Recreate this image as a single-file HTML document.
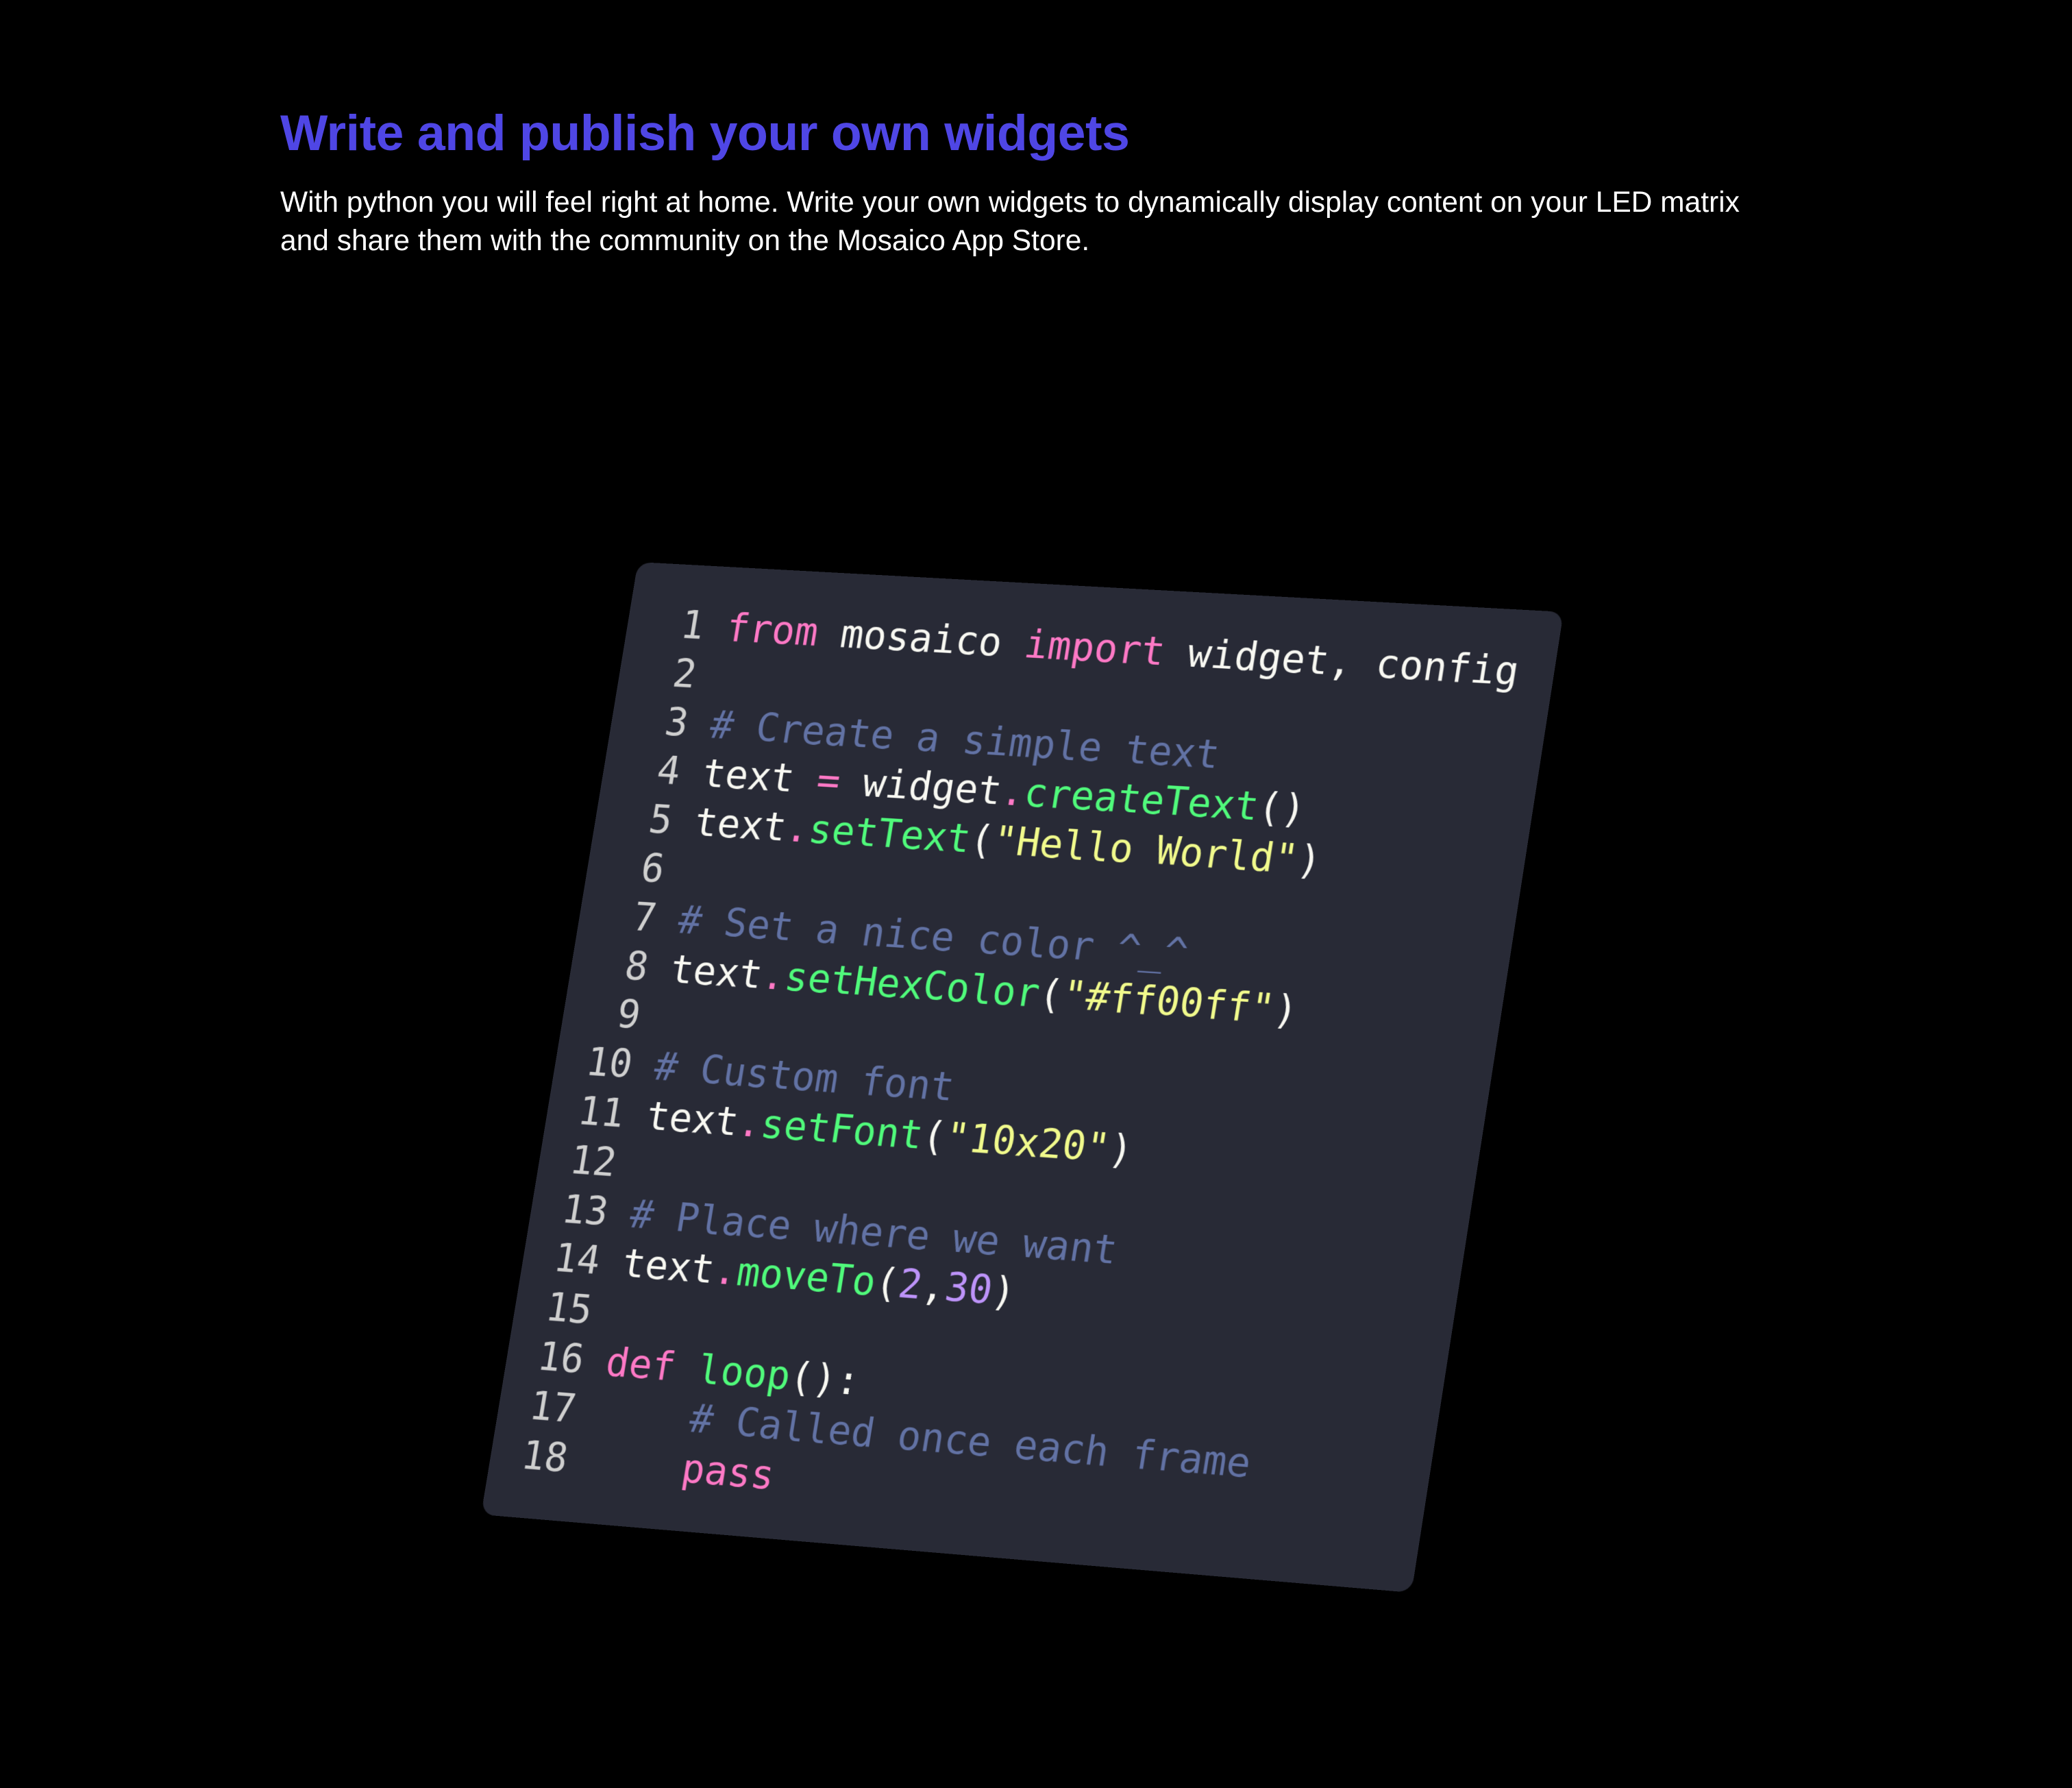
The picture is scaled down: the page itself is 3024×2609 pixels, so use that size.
<!DOCTYPE html>
<html><head><meta charset="utf-8"><style>
html,body{margin:0;padding:0;background:#000;width:3024px;height:2609px;overflow:hidden}
h1{position:absolute;left:409px;top:151px;margin:0;font:bold 73.5px "Liberation Sans",sans-serif;color:#4f46e5;letter-spacing:-0.5px;white-space:nowrap}
p{position:absolute;left:409px;top:268px;margin:0;font:42.5px/56px "Liberation Sans",sans-serif;color:#fff;width:2500px;white-space:nowrap}
.card{position:absolute;left:0;top:0;width:1355px;height:1400px;background:#282a36;border-radius:20px;transform-origin:0 0;transform:matrix3d(0.95011,0.035498,0,-0.000020576,-0.16843,0.97750,0,-0.0000069371,0,0,1,0,931,820,0,1)}
pre{margin:0;position:absolute;left:46px;top:54px;font:56.5px/71.8px "DejaVu Sans Mono","Liberation Mono",monospace;color:#f8f8f2}
.n{color:#cfcfcf}.k{color:#ff79c6}.f{color:#50fa7b}.s{color:#f1fa8c}.c{color:#6272a4}.d{color:#bd93f9}
</style></head><body>
<h1>Write and publish your own widgets</h1>
<p>With python you will feel right at home. Write your own widgets to dynamically display content on your LED matrix<br>and share them with the community on the Mosaico App Store.</p>
<div class="card"><pre><span class="n"> 1</span> <span class="k">from</span> mosaico <span class="k">import</span> widget, config
<span class="n"> 2</span>
<span class="n"> 3</span> <span class="c"># Create a simple text</span>
<span class="n"> 4</span> text <span class="k">=</span> widget<span class="k">.</span><span class="f">createText</span>()
<span class="n"> 5</span> text<span class="k">.</span><span class="f">setText</span>(<span class="s">"Hello World"</span>)
<span class="n"> 6</span>
<span class="n"> 7</span> <span class="c"># Set a nice color ^_^</span>
<span class="n"> 8</span> text<span class="k">.</span><span class="f">setHexColor</span>(<span class="s">"#ff00ff"</span>)
<span class="n"> 9</span>
<span class="n">10</span> <span class="c"># Custom font</span>
<span class="n">11</span> text<span class="k">.</span><span class="f">setFont</span>(<span class="s">"10x20"</span>)
<span class="n">12</span>
<span class="n">13</span> <span class="c"># Place where we want</span>
<span class="n">14</span> text<span class="k">.</span><span class="f">moveTo</span>(<span class="d">2</span>,<span class="d">30</span>)
<span class="n">15</span>
<span class="n">16</span> <span class="k">def</span> <span class="f">loop</span>():
<span class="n">17</span>     <span class="c"># Called once each frame</span>
<span class="n">18</span>     <span class="k">pass</span></pre></div>
</body></html>
